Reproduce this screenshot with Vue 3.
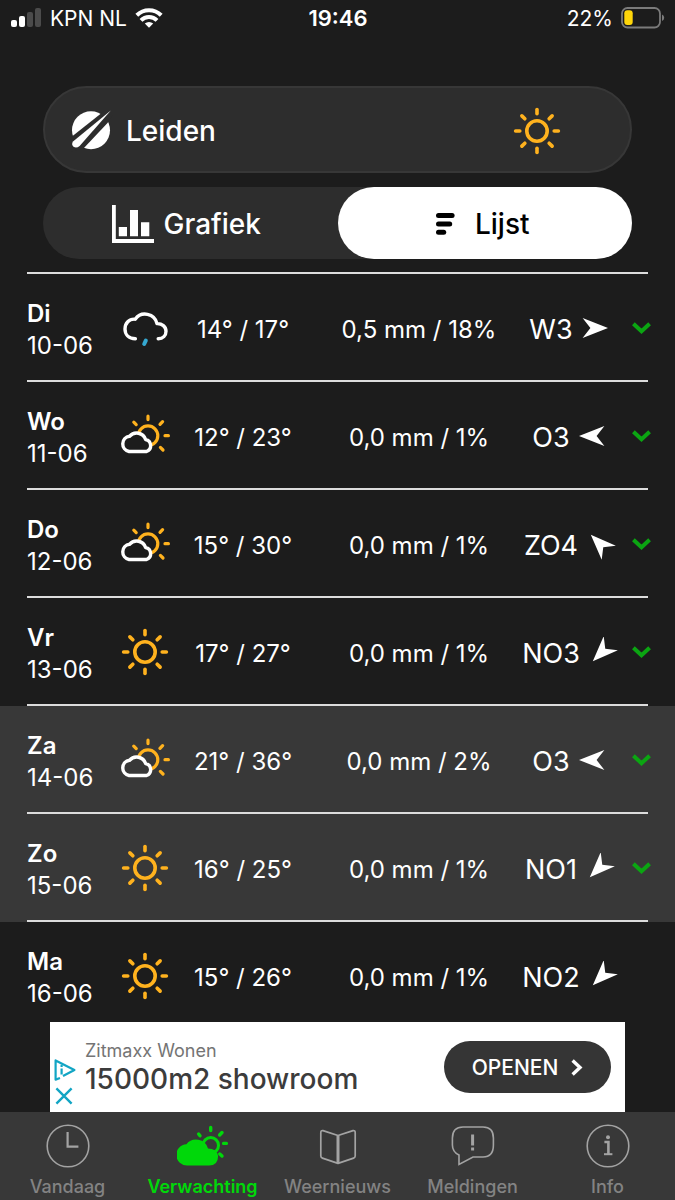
<script setup>
import { ref } from 'vue'

const activeTab = ref('lijst')
const activePage = ref('Verwachting')

// rotation is the direction the wind blows to, 0 = right
const days = ref([
    { name: 'Di', date: '10-06', icon: 'rain', temp: '14° / 17°', rain: '0,5 mm / 18%', wind: 'W3', rotation: 0 },
    { name: 'Wo', date: '11-06', icon: 'partly', temp: '12° / 23°', rain: '0,0 mm / 1%', wind: 'O3', rotation: 180 },
    { name: 'Do', date: '12-06', icon: 'partly', temp: '15° / 30°', rain: '0,0 mm / 1%', wind: 'ZO4', rotation: 225 },
    { name: 'Vr', date: '13-06', icon: 'sun', temp: '17° / 27°', rain: '0,0 mm / 1%', wind: 'NO3', rotation: 135 },
    { name: 'Za', date: '14-06', icon: 'partly', temp: '21° / 36°', rain: '0,0 mm / 2%', wind: 'O3', rotation: 180, weekend: true },
    { name: 'Zo', date: '15-06', icon: 'sun', temp: '16° / 25°', rain: '0,0 mm / 1%', wind: 'NO1', rotation: 135, weekend: true },
    { name: 'Ma', date: '16-06', icon: 'sun', temp: '15° / 26°', rain: '0,0 mm / 1%', wind: 'NO2', rotation: 135, last: true }
])

const pages = ['Vandaag', 'Verwachting', 'Weernieuws', 'Meldingen', 'Info']
const rays = [0, 45, 90, 135, 180, 225, 270, 315]
</script>

<template>
    <div class="app">
        <div class="status">
            <div class="status-side">
                <svg width="31" height="20" viewBox="0 0 31 20">
                    <rect x="0" y="12" width="6" height="7" rx="2" fill="#fff" />
                    <rect x="8" y="8" width="6" height="11" rx="2" fill="#fff" />
                    <rect x="16" y="4" width="6" height="15" rx="2" fill="#4b4b4b" />
                    <rect x="24" y="0" width="6" height="19" rx="2" fill="#4b4b4b" />
                </svg>
                <span>KPN NL</span>
                <svg width="28" height="20" viewBox="0 0 28 20" fill="none" stroke="#fff" stroke-width="4">
                    <path d="M1.8 7.2A17.4 17.4 0 0 1 26.2 7.2" />
                    <path d="M6 12.4A11.3 11.3 0 0 1 22 12.4" />
                    <path d="M14 19.8L9.8 15.6A6 6 0 0 1 18.2 15.6Z" fill="#fff" stroke="none" />
                </svg>
            </div>
            <div class="status-time">19:46</div>
            <div class="status-side status-right">
                <span>22%</span>
                <svg width="44" height="22" viewBox="0 0 44 22">
                    <rect x="1" y="1" width="38" height="19.5" rx="5.5" fill="none" stroke="#7b7b7b" stroke-width="1.8" />
                    <rect x="3.3" y="3.3" width="8.4" height="14.6" rx="3" fill="#ffd60a" />
                    <path d="M41 7.5Q43.2 8.6 43.2 10.8T41 14Z" fill="#7b7b7b" />
                </svg>
            </div>
        </div>

        <main class="content">
            <header class="header">
                <button class="location">
                    <svg width="42" height="42" viewBox="0 0 42 42">
                        <circle cx="20" cy="20.3" r="19" fill="#fff" />
                        <path d="M-1 28L30 3.4L42-5L44 2L36.5 13L12 39L0 42Z" fill="#2d2d2d" />
                        <path d="M39.8.6L2 31.5Q0 34.5 2.5 36.8Q5.5 38.6 8.6 36Z" fill="#fff" />
                    </svg>
                    <span class="location-name">Leiden</span>
                    <svg class="location-weather" width="50" height="50" viewBox="-25 -25 50 50" fill="none" stroke="#ffb21e" stroke-width="3.6" stroke-linecap="round">
                        <circle r="10.2" />
                        <path v-for="ray in rays" :key="ray" d="M17.2 0H21.4" :transform="`rotate(${ray})`" />
                    </svg>
                </button>
                <div class="tabs">
                    <button class="tab" :class="{ active: activeTab === 'grafiek' }" @click="activeTab = 'grafiek'">
                        <svg width="42" height="38" viewBox="0 0 42 38" fill="currentColor">
                            <path d="M0 0H3.8V34H42V38H0ZM6.8 22H15V31.2H6.8ZM18 5H26V31.2H18ZM29 17.3H37.3V31.2H29Z" />
                        </svg>
                        <span>Grafiek</span>
                    </button>
                    <button class="tab tab-list" :class="{ active: activeTab === 'lijst' }" @click="activeTab = 'lijst'">
                        <svg width="19" height="22" viewBox="0 0 19 22" fill="currentColor">
                            <rect width="18.6" height="5" rx="2.5" />
                            <rect y="8.4" width="16.2" height="5" rx="2.5" />
                            <rect y="16.8" width="10.2" height="5" rx="2.5" />
                        </svg>
                        <span>Lijst</span>
                    </button>
                </div>
            </header>

            <table class="forecast">
                <colgroup>
                    <col class="col-day">
                    <col class="col-icon">
                    <col class="col-temp">
                    <col>
                    <col class="col-wind">
                    <col class="col-more">
                </colgroup>
                <tbody>
                    <tr v-for="day in days" :key="day.date" :class="{ weekend: day.weekend, last: day.last }">
                        <th scope="row" class="day">
                            {{ day.name }}
                            <span class="date">{{ day.date }}</span>
                        </th>
                        <td>
                            <svg v-if="day.icon === 'sun'" width="50" height="50" viewBox="-25 -25 50 50" fill="none" stroke="#ffb21e" stroke-width="3.6" stroke-linecap="round">
                                <circle r="10.2" />
                                <path v-for="ray in rays" :key="ray" d="M17.2 0H21.4" :transform="`rotate(${ray})`" />
                            </svg>
                            <svg v-else-if="day.icon === 'partly'" width="50" height="50" viewBox="0 0 50 50" fill="none" stroke-width="3.2" stroke-linecap="round">
                                <g stroke="#ffb21e">
                                    <circle cx="28" cy="24.7" r="9.8" />
                                    <path d="M28 5.2V8.6M45 24.7H48.4M40 13.4L42.6 10.6M13.8 11.2L16.2 13.6M40.4 36.4L43 39" />
                                </g>
                                <path class="cloud" d="M9 40.5A7.7 7.7 0 0 1 9.5 25.3A9.4 9.4 0 0 1 25.6 28.6A6.2 6.2 0 0 1 26.6 40.5Z" stroke="#fff" stroke-width="3.4" stroke-linejoin="round" />
                            </svg>
                            <svg v-else width="50" height="50" viewBox="0 0 50 50" fill="none" stroke="#fff" stroke-width="3.4" stroke-linecap="round" stroke-linejoin="round">
                                <path d="M15.4 35.7C8.5 35.7 5 31.2 5 25.9C5 20.4 9 15.6 15.2 16.2A12.2 12.2 0 0 1 37 20.6C42 20.4 46 23.6 46 28.2C46 32.6 43 35.6 38.2 35.7" />
                                <path d="M25.8 37.6L24.2 41" stroke="#35a8d0" stroke-width="4" />
                            </svg>
                        </td>
                        <td class="value">{{ day.temp }}</td>
                        <td class="value rain">{{ day.rain }}</td>
                        <td class="value">
                            <div class="wind">
                                <span>{{ day.wind }}</span>
                                <svg width="32" height="32" viewBox="-16 -15 32 32">
                                    <path d="M13 0L-12.4-10L-4.6 0L-12.4 10Z" fill="#fff" :transform="`rotate(${day.rotation})`" />
                                </svg>
                            </div>
                        </td>
                        <td class="more">
                            <button v-if="!day.last" class="expand" :aria-label="`Meer over ${day.name}`">
                                <svg width="19" height="12" viewBox="0 0 19 12" fill="none" stroke="#0ba512" stroke-width="4">
                                    <path d="M1.4 1.8L9.5 9.2L17.6 1.8" />
                                </svg>
                            </button>
                        </td>
                    </tr>
                </tbody>
            </table>
        </main>

        <aside class="ad">
            <div class="ad-marks">
                <svg width="22" height="22" viewBox="0 0 22 22" fill="none" stroke="#12a5c4" stroke-width="2.2">
                    <path d="M6 19L1.6 20.6V1.4L20.4 11L9 17" stroke-linejoin="round" />
                    <path d="M7.6 9.4V15.6M7.6 5.8V8" />
                </svg>
                <svg width="20" height="18" viewBox="0 0 20 18" fill="none" stroke="#12a5c4" stroke-width="2.4">
                    <path d="M2.4 1.4L17.6 16.6M17.6 1.4L2.4 16.6" />
                </svg>
            </div>
            <div class="ad-text">
                <div class="ad-brand">Zitmaxx Wonen</div>
                <div class="ad-title">15000m2 showroom</div>
            </div>
            <button class="ad-open">
                <span>OPENEN</span>
                <svg width="12" height="17" viewBox="0 0 12 17" fill="none" stroke="#fff" stroke-width="3.4">
                    <path d="M1.6 1.6L9 8.5L1.6 15.4" />
                </svg>
            </button>
        </aside>

        <nav class="nav">
            <a v-for="page in pages" :key="page" href="#" class="nav-item" :class="{ active: activePage === page }" @click.prevent="activePage = page">
                <svg v-if="page === 'Vandaag'" width="44" height="44" viewBox="0 0 44 44" fill="none" stroke="#a3a3a3">
                    <circle cx="22" cy="22" r="20.8" stroke-width="1.6" />
                    <path d="M21.6 8V22.6H32.4" stroke-width="2.2" />
                </svg>
                <svg v-else-if="page === 'Verwachting'" width="52" height="44" viewBox="0 -2 52 44" fill="none" stroke="#00d80a" stroke-width="3.4" stroke-linecap="round">
                    <path d="M33.7 1.4V4.6M42.6 9L45 6.5M46.6 17.4H49.4M42.8 28L45 30M21.6 8L23 9.8" />
                    <circle cx="33.7" cy="19.4" r="7.8" stroke-width="3" />
                    <path d="M10.5 39.5A10.5 10.5 0 0 1 9.4 18.2A12.5 12.5 0 0 1 31 22.4Q39.4 22.6 41 29.4Q41.6 39.5 32 39.5Z" fill="#00d80a" stroke="none" />
                </svg>
                <svg v-else-if="page === 'Weernieuws'" width="44" height="44" viewBox="0 0 44 44" fill="none" stroke="#a3a3a3" stroke-width="1.7" stroke-linejoin="round">
                    <path d="M22 11.5L7 6.6Q4.8 6.2 4.8 8.6V32Q4.8 33.6 6.4 34.1L22 39.4L37.6 34.1Q39.2 33.6 39.2 32V8.6Q39.2 6.2 37 6.6Z" />
                    <path d="M22 11.5V39" stroke-width="3" />
                </svg>
                <svg v-else-if="page === 'Meldingen'" width="44" height="44" viewBox="0 0 44 44" fill="none" stroke="#a3a3a3" stroke-width="1.6">
                    <path d="M8 31Q1.4 28 1.4 21V14Q1.4 3 12 3H32Q42.4 3 42.4 14V21Q42.4 33 32 33H22L8 40.4Z" />
                    <path d="M21.6 10.6V21.6M21.6 23.6V26.6" stroke-width="3" />
                </svg>
                <svg v-else width="44" height="44" viewBox="0 0 44 44" fill="none" stroke="#a3a3a3">
                    <circle cx="22" cy="22" r="20.8" stroke-width="1.6" />
                    <path d="M18.4 18H22.4V30" stroke-width="2.6" />
                    <path d="M18 30.2H26.4" stroke-width="2" />
                    <circle cx="22" cy="13.2" r="2" fill="#a3a3a3" stroke="none" />
                </svg>
                <span>{{ page }}</span>
            </a>
        </nav>
    </div>
</template>

<style>
body {
    background-color: #1c1c1c;
}
</style>

<style scoped>
.app {
    display: flex;
    flex-direction: column;
    height: 100vh;
    color: #fff;
    background-color: #1c1c1c;
    font-family: Inter, "Liberation Sans", sans-serif;
}
button {
    padding: 0;
    border: 0;
    background: none;
    color: inherit;
    font: inherit;
    cursor: pointer;
}
svg {
    display: block;
    flex: none;
}
.status {
    display: grid;
    grid-template-columns: 1fr auto 1fr;
    align-items: center;
    height: 36px;
    padding: 0 10px 0 11px;
    font-size: 21px;
}
.status-side {
    display: flex;
    align-items: center;
    gap: 8px;
}
.status-right {
    justify-content: flex-end;
}
.status-time {
    font-size: 22px;
    font-weight: 600;
}
.content {
    flex: 1;
    min-height: 0;
    overflow-y: auto;
    scrollbar-width: none;
}
.header {
    padding: 50px 43px 13px;
}
.location {
    display: flex;
    align-items: center;
    gap: 13px;
    box-sizing: border-box;
    width: 100%;
    height: 87px;
    padding: 2px 68px 0 26px;
    border: 2px solid #373737;
    border-radius: 44px;
    background-color: #2d2d2d;
}
.location-name {
    font-size: 28px;
    font-weight: 500;
}
.location-weather {
    margin-left: auto;
}
.tabs {
    display: grid;
    grid-template-columns: 1fr 1fr;
    margin-top: 14px;
    border-radius: 36px;
    background-color: #2d2d2d;
}
.tab {
    display: flex;
    align-items: center;
    justify-content: center;
    gap: 10px;
    height: 72px;
    padding: 1px 8px 0 0;
    border-radius: 36px;
    font-size: 28px;
    font-weight: 500;
}
.tab-list {
    gap: 20px;
    padding-right: 4px;
}
.tab.active {
    background-color: #fff;
    color: #000;
}
.forecast {
    width: 100%;
    padding-top: 2px;
    border-spacing: 0;
    table-layout: fixed;
    background: linear-gradient(#dcdcdc, #dcdcdc) 27px 0 / calc(100% - 54px) 2px no-repeat;
    font-size: 24px;
}
.forecast tr {
    --row-color: #1c1c1c;
    height: 108px;
    background: linear-gradient(#dcdcdc, #dcdcdc) 27px 100% / calc(100% - 54px) 2px no-repeat var(--row-color);
}
.forecast tr.weekend {
    --row-color: #383838;
}
.forecast tr.last {
    background: none;
}
.forecast td {
    padding: 0;
    text-align: center;
    white-space: nowrap;
}
.forecast .value {
    padding-top: 2px;
}
.col-day {
    width: 120px;
}
.col-icon {
    width: 62px;
}
.col-temp {
    width: 122px;
}
.col-wind {
    width: 124px;
}
.col-more {
    width: 43px;
}
.forecast .day {
    padding: 4px 0 0 27px;
    font-weight: 600;
    line-height: 32px;
    text-align: left;
}
.date {
    display: block;
    font-weight: 400;
}
.forecast .rain {
    padding-left: 26px;
}
.wind {
    display: flex;
    align-items: center;
    justify-content: center;
    gap: 6px;
    font-size: 27px;
}
.forecast .more {
    text-align: left;
}
.expand {
    display: block;
}
.cloud {
    fill: var(--row-color);
}
.ad {
    display: flex;
    align-items: center;
    box-sizing: border-box;
    height: 90px;
    margin: 0 50px;
    padding: 0 14px 0 4px;
    background-color: #fff;
    color: #3c3c3c;
}
.ad-marks {
    display: flex;
    flex-direction: column;
    align-self: flex-end;
    gap: 6px;
    padding-bottom: 7px;
}
.ad-text {
    margin-left: 9px;
}
.ad-brand {
    color: #747474;
    font-size: 18px;
    line-height: 24px;
}
.ad-title {
    font-size: 28px;
    font-weight: 500;
    line-height: 32px;
}
.ad-open {
    display: flex;
    align-items: center;
    justify-content: center;
    gap: 13px;
    width: 167px;
    height: 52px;
    margin-left: auto;
    border-radius: 26px;
    background-color: #353535;
    color: #fff;
    font-size: 21px;
    font-weight: 500;
}
.nav {
    display: grid;
    grid-template-columns: repeat(5, 1fr);
    height: 88px;
    background-color: #383838;
}
.nav-item {
    display: flex;
    flex-direction: column;
    align-items: center;
    gap: 8px;
    padding-top: 12px;
    color: #838383;
    font-size: 18px;
    font-weight: 500;
    line-height: 22px;
    text-decoration: none;
}
.nav-item.active {
    color: #00d80a;
    font-weight: 600;
}
</style>
